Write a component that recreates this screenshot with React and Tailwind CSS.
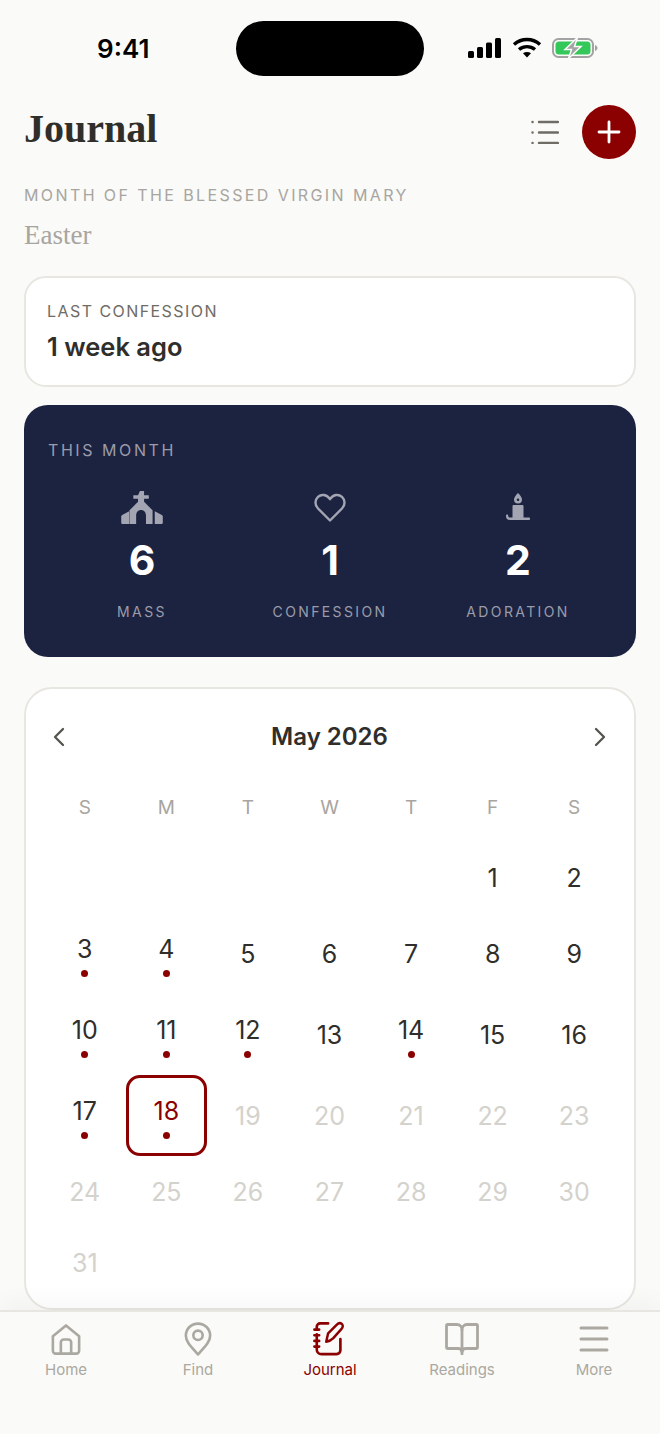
import React from 'react';

const sans = "font-['Inter','Liberation_Sans',sans-serif]";
const serif = "font-['Liberation_Serif','DejaVu_Serif',serif]";

// marked days carry a dot, rows with dots are taller
const weeks = [
  [null, null, null, null, null, 1, 2],
  [3, 4, 5, 6, 7, 8, 9],
  [10, 11, 12, 13, 14, 15, 16],
  [17, 18, 19, 20, 21, 22, 23],
  [24, 25, 26, 27, 28, 29, 30],
  [31, null, null, null, null, null, null],
];
const marked = [3, 4, 10, 11, 12, 14, 17, 18];
const tallRows = [1, 2, 3];
const today = 18;

function StatusBar() {
  return (
    <div className="relative h-[96px] shrink-0 flex items-start justify-between">
      <div className={`${sans} mt-[33px] ml-[97px] text-[26px] leading-[32px] font-semibold text-black`}>9:41</div>
      <div className="absolute left-[236px] top-[21px] w-[188px] h-[55px] rounded-full bg-black" />
      <div className="mt-[37px] mr-[62px] flex items-center gap-[10px]">
        <svg width="34" height="22" viewBox="0 0 34 22" fill="#000">
          <rect x="0" y="14" width="6" height="7" rx="1.5" />
          <rect x="9" y="10" width="6" height="11" rx="1.5" />
          <rect x="18" y="5.5" width="6" height="15.5" rx="1.5" />
          <rect x="27" y="1" width="6" height="20" rx="1.5" />
        </svg>
        <svg width="30" height="22" viewBox="0 0 30 22" fill="none" stroke="#000" strokeWidth="3.4">
          <path d="M2 7.5c7.5-6.6 18.500-6.600 26 0" />
          <path d="M7 12.500c4.600-3.900 11.400-3.900 16 0" />
          <path d="M15 20.500l-4-4.300c2.300-1.700 5.700-1.700 8 0z" fill="#000" stroke="none" />
        </svg>
        <svg width="46" height="22" viewBox="0 0 46 22" fill="none">
          <rect x="1" y="2" width="40" height="18" rx="5.500" stroke="#a3a3a3" strokeWidth="2" />
          <rect x="3.500" y="4.500" width="35" height="13" rx="3.500" fill="#34c759" />
          <path d="M43 8v6c1.500-.5 2.500-1.700 2.500-3s-1-2.500-2.500-3z" fill="#a3a3a3" />
          <path d="M25.500 0.500L13 12.500h6.500L16.500 21.500 29 9.500h-6.500z" fill="#a3a3a3" stroke="#fafaf8" strokeWidth="1.500" />
        </svg>
      </div>
    </div>
  );
}

function Header() {
  return (
    <div className="flex items-start justify-between pl-[24px] pr-[24px] pt-[9px]">
      <h1 className={`${serif} mt-[1px] text-[40px] leading-[46px] font-bold text-[#2f2e2b]`}>Journal</h1>
      <div className="flex items-center gap-[23px]">
        <svg width="28" height="24" viewBox="0 0 28 24" fill="none" stroke="#6f6c65" strokeWidth="2.400" strokeLinecap="round">
          <path d="M8 2h19M8 12.500h19M8 23h19" />
          <path d="M1.500 2h.1M1.500 12.500h.1M1.500 23h.1" />
        </svg>
        <div className="w-[54px] h-[54px] rounded-full bg-[#8b0000] flex items-center justify-center">
          <svg width="24" height="24" viewBox="0 0 24 24" fill="none" stroke="#fff" strokeWidth="2.800" strokeLinecap="round">
            <path d="M12 2v20M2 12h20" />
          </svg>
        </div>
      </div>
    </div>
  );
}

function ChurchIcon() {
  return (
    <svg width="42" height="34" viewBox="0 0 44 36" fill="#a3a5b3">
      <path d="M19.800 0h4.400v4.500h5v3.800h-5v3l9 9.200V35h-7V26c0-3.700-2.300-6-5.200-6s-5.200 2.300-5.200 6v9h-7V20.500l9-9.200v-3h-5V4.500h5z" />
      <path d="M8.500 21.500V35H1.500c-.8 0-1.500-.7-1.500-1.500V27c0-.8.300-1.300 1-1.700z" />
      <path d="M35.500 21.500V35h7c.8 0 1.500-.7 1.500-1.500V27c0-.8-.3-1.300-1-1.700z" />
    </svg>
  );
}

function HeartIcon() {
  return (
    <svg width="32" height="30" viewBox="0 0 32 30" fill="none" stroke="#a3a5b3" strokeWidth="2.400" strokeLinejoin="round">
      <path d="M16 27.500L4 15.500C.500 12 .800 6.800 4 3.800c3.400-3 8.800-2.500 12 2.400 3.200-4.900 8.600-5.400 12-2.400 3.200 3 3.500 8.200 0 11.700z" />
    </svg>
  );
}

function CandleIcon() {
  return (
    <svg width="24" height="30" viewBox="0 0 24 30" fill="#a3a5b3">
      <path fillRule="evenodd" d="M12 0c2 2 4 4.400 4 6.500a4 4 0 0 1-8 0C8 4.400 10 2 12 0zm0 5.500a1.300 1.300 0 1 0 0 2.600 1.300 1.300 0 0 0 0-2.600z" />
      <rect x="6.500" y="12" width="11" height="14" rx="1" />
      <path d="M1 21.500c.8 0 1.200.4 1.200 1.200 0 1.200.6 1.800 1.800 1.800h19c.8 0 1 .5 1 1.200s-.3 1.300-1 1.300H4c-2.600 0-4-1.600-4-4 0-.9.200-1.500 1-1.500z" />
    </svg>
  );
}

function Stat({ icon, value, label }) {
  return (
    <div className="flex flex-col items-center">
      <div className="h-[38px] flex items-center justify-center">{icon}</div>
      <div className="mt-[8px] text-[41px] leading-[50px] font-bold text-white">{value}</div>
      <div className="mt-[17px] text-[14px] leading-[20px] tracking-[0.17em] text-[#9a9cab]">{label}</div>
    </div>
  );
}

function Calendar() {
  return (
    <div className="mt-[30px] mx-[24px] h-[623px] shrink-0 rounded-[28px] border-2 border-[#e8e6e1] bg-white pl-[18px] pr-[19px]">
      <div className="h-[107px] flex items-center justify-between pb-[11px] px-[8px]">
        <svg width="14" height="20" viewBox="0 0 14 20" fill="none" stroke="#55534e" strokeWidth="2.300" strokeLinecap="round" strokeLinejoin="round">
          <path d="M11 2L3 10l8 8" />
        </svg>
        <div className="text-[24px] leading-[32px] font-semibold text-[#2f2e2b]">May 2026</div>
        <svg width="14" height="20" viewBox="0 0 14 20" fill="none" stroke="#55534e" strokeWidth="2.300" strokeLinecap="round" strokeLinejoin="round">
          <path d="M3 2l8 8-8 8" />
        </svg>
      </div>
      <div className="grid grid-cols-7 h-[46px] items-start">
        {['S', 'M', 'T', 'W', 'T', 'F', 'S'].map((d, i) => (
          <div key={i} className="text-center text-[19px] leading-[24px] text-[#a8a5a0]">{d}</div>
        ))}
      </div>
      {weeks.map((week, r) => (
        <div key={r} className={`grid grid-cols-7 ${tallRows.includes(r) ? 'h-[81px]' : 'h-[71px]'}`}>
          {week.map((day, c) => {
            const isMarked = marked.includes(day);
            const isToday = day === today;
            const isFuture = day > today;
            return (
              <div key={c} className={`flex flex-col items-center justify-center ${isToday ? 'border-[3px] border-[#8b0000] rounded-[14px]' : ''}`}>
                {day && (
                  <div className={`text-[25px] leading-[30px] ${isToday ? 'text-[#8b0000]' : isFuture ? 'text-[#d4d2cc]' : 'text-[#2f2e2b]'}`}>{day}</div>
                )}
                {isMarked && <div className="mt-[6px] mb-[-3px] w-[7px] h-[7px] rounded-full bg-[#8b0000]" />}
              </div>
            );
          })}
        </div>
      ))}
    </div>
  );
}

function HomeIcon() {
  return (
    <svg width="30" height="33" viewBox="0 0 32 34" fill="none" stroke="#aaa8a0" strokeWidth="2.800" strokeLinejoin="round">
      <path d="M2 13.500L16 2l14 11.500V29a3 3 0 0 1-3 3H5a3 3 0 0 1-3-3z" />
      <path d="M10.500 32V20a3 3 0 0 1 3-3h5a3 3 0 0 1 3 3v12" />
    </svg>
  );
}

function PinIcon() {
  return (
    <svg width="28" height="36" viewBox="0 0 30 36" fill="none" stroke="#aaa8a0" strokeWidth="2.800" strokeLinejoin="round">
      <path d="M15 34.500C8 26.500 2 21 2 14.500 2 7 7.800 1.500 15 1.500S28 7 28 14.500c0 6.500-6 12-13 20z" />
      <circle cx="15" cy="14" r="5" />
    </svg>
  );
}

function JournalIcon() {
  return (
    <svg width="34" height="36" viewBox="0 0 36 36" fill="none" stroke="#8b0000" strokeLinecap="round" strokeLinejoin="round">
      <path d="M4 8V5a3.500 3.500 0 0 1 3.500-3.500H16" strokeWidth="2.800" />
      <path d="M4 13v16a5 5 0 0 0 5 5h16a4 4 0 0 0 4-4V18" strokeWidth="2.800" />
      <path d="M1.500 8h5M1.500 14h5M1.500 20h5M1.500 26h5" strokeWidth="2.800" />
      <path d="M14 21l2-9L25 3c1.800-1.800 4-2.200 5.500-1 1.500 1.400 1.300 3.800-.5 5.600L21.500 17c-2 2-4.500 3.400-7.500 4z" strokeWidth="2.600" />
    </svg>
  );
}

function BookIcon() {
  return (
    <svg width="34" height="32" viewBox="0 0 34 32" fill="none" stroke="#aaa8a0" strokeWidth="2.800" strokeLinejoin="round" strokeLinecap="round">
      <path d="M17 7c0-3-2-5.500-5-5.500H2.500a1 1 0 0 0-1 1v22a1 1 0 0 0 1 1H13c2.500 0 4 1.500 4 3.500 0-2 1.500-3.500 4-3.500h10.500a1 1 0 0 0 1-1v-22a1 1 0 0 0-1-1H22c-3 0-5 2.500-5 5.500z" />
      <path d="M17 7v24" />
    </svg>
  );
}

function MenuIcon() {
  return (
    <svg width="30" height="28" viewBox="0 0 30 28" fill="none" stroke="#aaa8a0" strokeWidth="3" strokeLinecap="round">
      <path d="M2 3h26M2 14h26M2 25h26" />
    </svg>
  );
}

function NavItem({ icon, label, active }) {
  return (
    <div className="flex-1 flex flex-col items-center">
      <div className="h-[36px] flex items-center justify-center">{icon}</div>
      <div className={`mt-[3px] text-[15px] leading-[20px] ${active ? 'text-[#8b0000]' : 'text-[#aaa8a0]'}`}>{label}</div>
    </div>
  );
}

export default function App() {
  return (
    <div className={`${sans} w-[660px] h-[1434px] overflow-hidden flex flex-col bg-[#fafaf8]`}>
      <div className="flex-1 min-h-0 overflow-hidden flex flex-col">
        <StatusBar />
        <Header />

        <div className="mt-[25px] px-[24px] text-[16px] leading-[22px] tracking-[0.15em] text-[#a8a5a0]">MONTH OF THE BLESSED VIRGIN MARY</div>
        <div className={`${serif} mt-[14px] px-[24px] text-[27px] leading-[30px] text-[#a8a5a0]`}>Easter</div>

        <div className="mt-[26px] mx-[24px] h-[111px] shrink-0 rounded-[22px] border-2 border-[#e8e6e1] bg-white pl-[21px] pt-[22px]">
          <div className="text-[16px] leading-[22px] tracking-[0.09em] text-[#6f6c65]">LAST CONFESSION</div>
          <div className="mt-[8px] text-[25.5px] leading-[34px] font-semibold text-[#2f2e2b]">1 week ago</div>
        </div>

        <div className="mt-[18px] mx-[24px] h-[252px] shrink-0 rounded-[24px] bg-[#1c2340] px-[24px] pt-[34px]">
          <div className="text-[16px] leading-[22px] tracking-[0.16em] text-[#9a9cab]">THIS MONTH</div>
          <div className="mt-[28px] grid grid-cols-3">
            <Stat icon={<ChurchIcon />} value="6" label="MASS" />
            <Stat icon={<HeartIcon />} value="1" label="CONFESSION" />
            <Stat icon={<CandleIcon />} value="2" label="ADORATION" />
          </div>
        </div>

        <Calendar />
      </div>

      <div className="h-[124px] shrink-0 border-t-2 border-[#e8e6e1] bg-[#fafaf8] flex pt-[9px] px-[0px] shadow-[0_-10px_20px_rgba(0,0,0,0.03)] z-10">
        <NavItem icon={<HomeIcon />} label="Home" />
        <NavItem icon={<PinIcon />} label="Find" />
        <NavItem icon={<JournalIcon />} label="Journal" active />
        <NavItem icon={<BookIcon />} label="Readings" />
        <NavItem icon={<MenuIcon />} label="More" />
      </div>
    </div>
  );
}
